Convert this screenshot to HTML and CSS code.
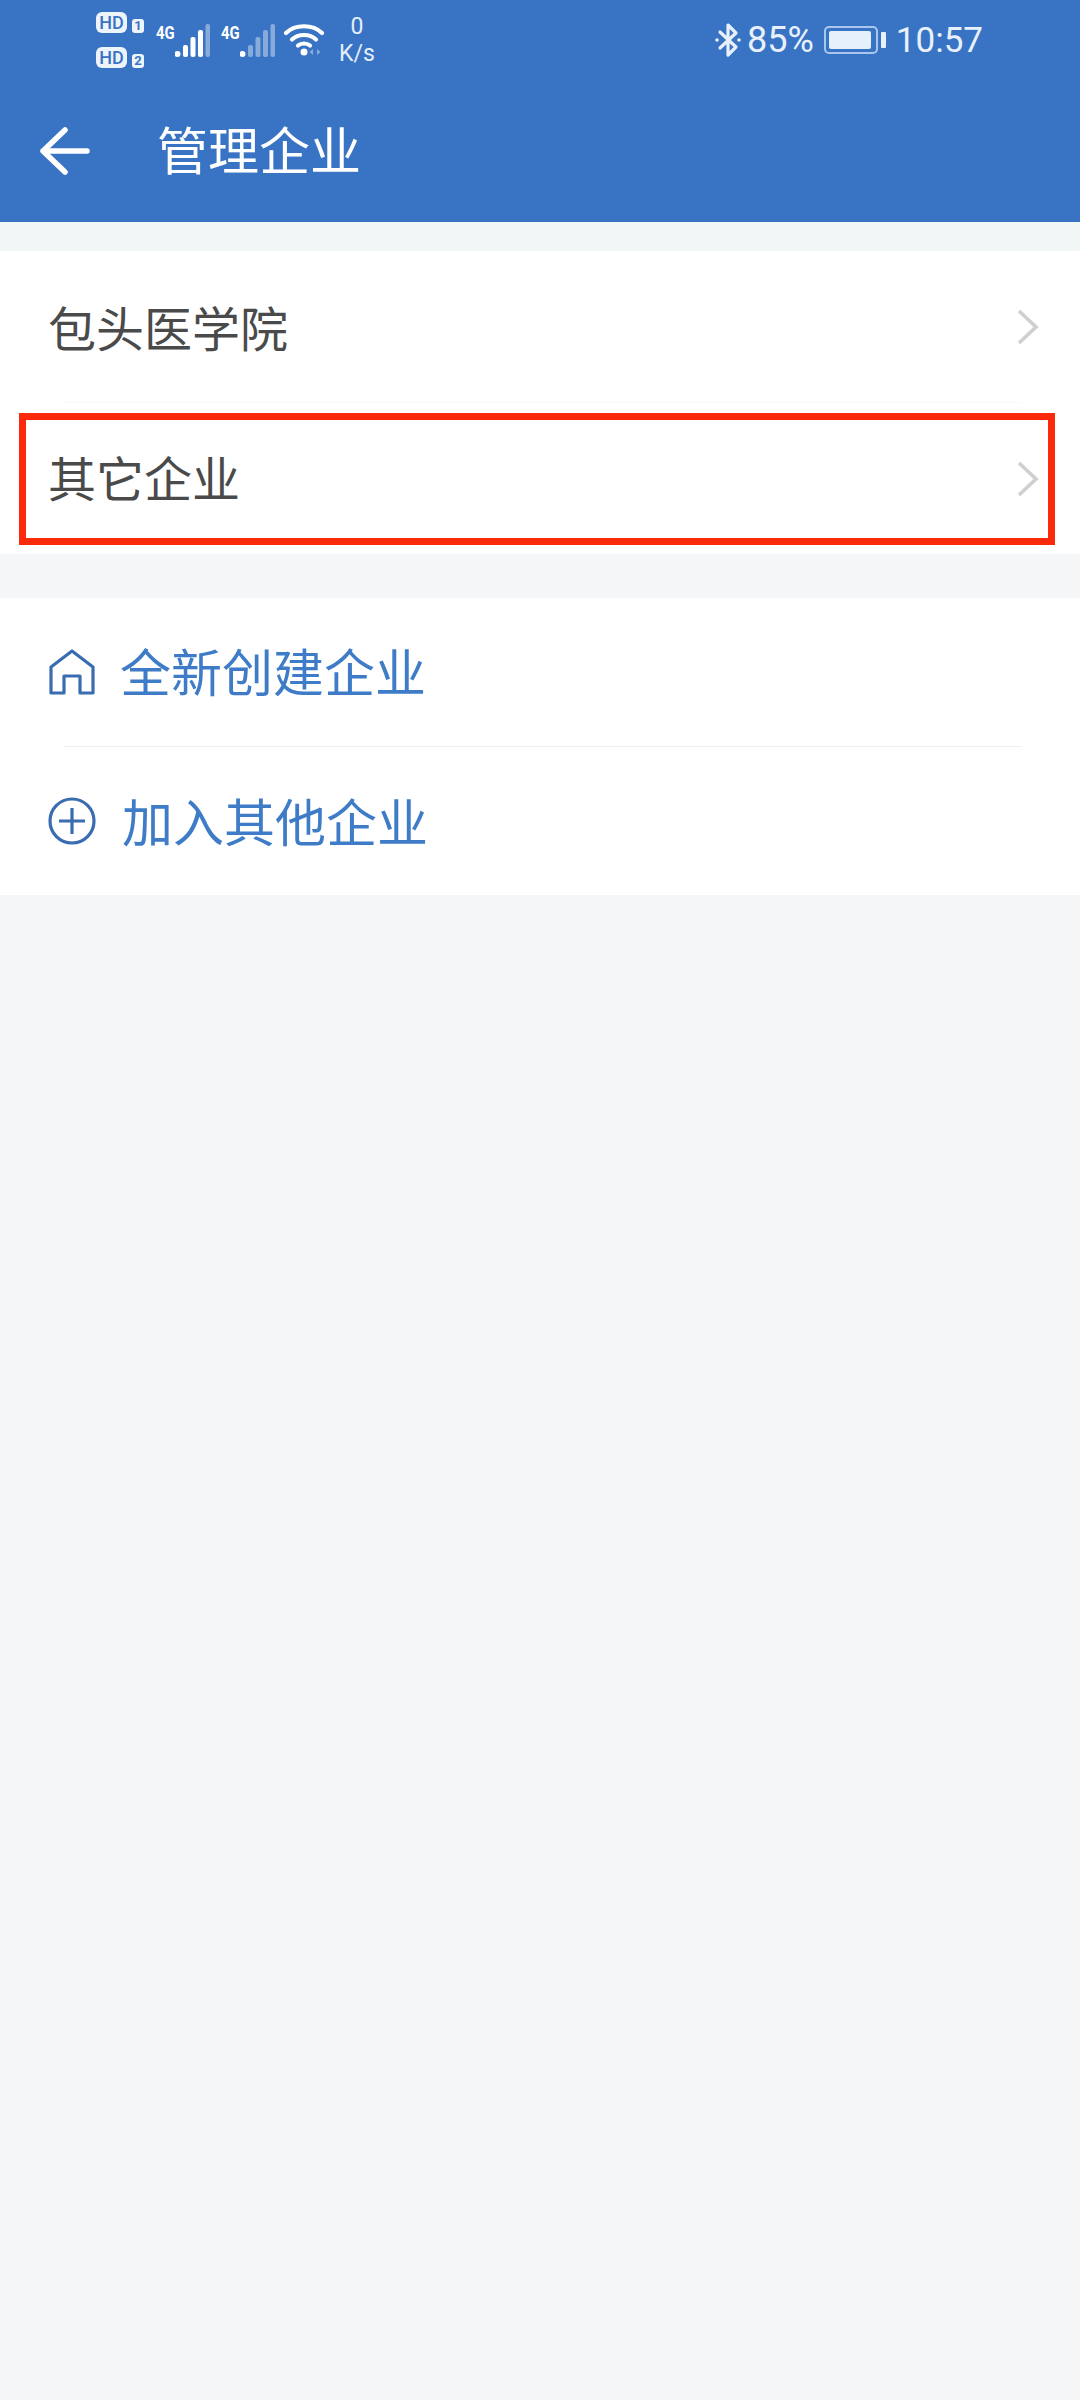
FILE: index.html
```html
<!DOCTYPE html>
<html lang="zh-CN">
<head>
    <meta charset="UTF-8">
    <meta name="viewport" content="width=device-width, initial-scale=1.0">
    <title>管理企业</title>
    <link rel="stylesheet" href="styles.css">
</head>
<body>

    <header class="app-header">
        <div class="status-bar">
            <div class="status-left">
                <div class="sim-col">
                    <div class="sim-row"><span class="hd-badge">HD</span><span class="sim-num">1</span></div>
                    <div class="sim-row"><span class="hd-badge">HD</span><span class="sim-num">2</span></div>
                </div>
                <div class="signal">
                    <span class="net-type">4G</span>
                    <svg class="signal-bars" viewBox="0 0 35 33">
                        <circle cx="2.5" cy="30" r="3" fill="#fff"/>
                        <rect x="8" y="21" width="5" height="12" rx="2" fill="#fff"/>
                        <rect x="15.5" y="13" width="5" height="20" rx="2" fill="#fff"/>
                        <rect x="23" y="6" width="5" height="27" rx="2" fill="#fff"/>
                        <rect x="30.5" y="0" width="4.5" height="33" rx="2" fill="#fff" opacity="0.4"/>
                    </svg>
                </div>
                <div class="signal">
                    <span class="net-type">4G</span>
                    <svg class="signal-bars" viewBox="0 0 35 33">
                        <circle cx="2.5" cy="30" r="3" fill="#fff"/>
                        <rect x="8" y="21" width="5" height="12" rx="2" fill="#fff" opacity="0.4"/>
                        <rect x="15.5" y="13" width="5" height="20" rx="2" fill="#fff" opacity="0.4"/>
                        <rect x="23" y="6" width="5" height="27" rx="2" fill="#fff" opacity="0.4"/>
                        <rect x="30.5" y="0" width="4.5" height="33" rx="2" fill="#fff" opacity="0.4"/>
                    </svg>
                </div>
                <svg class="wifi" viewBox="0 0 40 34" fill="none" stroke="#fff" stroke-width="4.2" stroke-linecap="round">
                    <path d="M2 10 C11 1 29 1 38 10"/>
                    <path d="M8 16.500 C14 10.500 26 10.500 32 16.500"/>
                    <path d="M14 22.500 C17 19.800 23 19.800 26 22.500"/>
                    <circle cx="20" cy="29" r="3.500" fill="#fff" stroke="none"/>
                    <path d="M29 26 L25.500 29 L29 32 Z M33 26 L36.500 29 L33 32 Z" fill="#fff" stroke="none" opacity="0.4"/>
                </svg>
                <div class="net-speed"><span>0</span><span>K/s</span></div>
            </div>
            <div class="status-right">
                <svg class="bluetooth" viewBox="0 0 26 36" fill="none" stroke="#e8f1fb" stroke-width="3.200" stroke-linejoin="round" stroke-linecap="round">
                    <path d="M5 10 L21 25 L13 33 L13 3 L21 11 L5 26"/>
                    <circle cx="2" cy="18" r="1.800" fill="#e8f1fb" stroke="none"/>
                    <circle cx="24" cy="18" r="1.800" fill="#e8f1fb" stroke="none"/>
                </svg>
                <span class="battery-pct">85%</span>
                <div class="battery">
                    <div class="battery-body"><div class="battery-fill"></div></div>
                    <div class="battery-nub"></div>
                </div>
                <span class="clock">10:57</span>
            </div>
        </div>
        <div class="title-bar">
            <svg class="back-icon" viewBox="0 0 50 48" fill="none" stroke="#fff" stroke-width="5.500" stroke-linecap="round" stroke-linejoin="round">
                <path d="M47 24 L3 24 M25 3 L3 24 L25 45"/>
            </svg>
            <h1>管理企业</h1>
        </div>
    </header>

    <section class="list-card first-card">
        <a class="list-row">
            <span class="row-name">包头医学院</span>
            <svg class="chevron" viewBox="0 0 22 36" fill="none" stroke="#cfcfcf" stroke-width="3.600">
                <path d="M2 2 L19 18 L2 34"/>
            </svg>
        </a>
        <div class="divider faint"></div>
        <a class="list-row">
            <span class="row-name">其它企业</span>
            <svg class="chevron" viewBox="0 0 22 36" fill="none" stroke="#cfcfcf" stroke-width="3.600">
                <path d="M2 2 L19 18 L2 34"/>
            </svg>
            <div class="red-mark"></div>
        </a>
    </section>

    <section class="list-card action-card">
        <a class="list-row action-row">
            <svg class="action-icon" viewBox="0 0 48 48" fill="none" stroke="#3a6cb0" stroke-width="3.200" stroke-linejoin="round">
                <path d="M3 19 L24 3 L45 19 L45 45 L32 45 L32 28 L16 28 L16 45 L3 45 Z"/>
            </svg>
            <span class="action-name">全新创建企业</span>
        </a>
        <div class="divider"></div>
        <a class="list-row action-row">
            <svg class="action-icon" viewBox="0 0 48 48" fill="none" stroke="#3a6cb0" stroke-width="3.200">
                <circle cx="24" cy="24" r="22"/>
                <path d="M11 24 L37 24 M24 11 L24 37"/>
            </svg>
            <span class="action-name">加入其他企业</span>
        </a>
    </section>

</body>
</html>
```

FILE: styles.css
```css
* {
    margin: 0;
    padding: 0;
    box-sizing: border-box;
}

body {
    width: 1080px;
    min-height: 2400px;
    background-color: #f5f6f8;
    font-family: "Liberation Sans", "Noto Sans CJK SC", sans-serif;
}

.app-header {
    height: 222px;
    background-color: #3974c4;
    color: #fff;
}

.status-bar {
    height: 80px;
    display: flex;
    justify-content: space-between;
    align-items: center;
    padding: 0 97px 0 96px;
    font-family: Roboto, sans-serif;
}

.status-left,
.status-right {
    display: flex;
    align-items: center;
}

.sim-col {
    display: flex;
    flex-direction: column;
    gap: 14px;
    margin-right: 12px;
}

.sim-row {
    display: flex;
    align-items: flex-end;
    gap: 5px;
}

.hd-badge {
    width: 31px;
    height: 21px;
    border-radius: 6px;
    background-color: #eef4fc;
    color: #3974c4;
    font-size: 18px;
    font-weight: 500;
    line-height: 21px;
    text-align: center;
}

.sim-num {
    width: 12px;
    height: 14px;
    border-radius: 3px;
    background-color: #eef4fc;
    color: #3974c4;
    font-size: 13px;
    font-weight: 700;
    line-height: 14px;
    text-align: center;
}

.signal {
    display: flex;
    align-items: flex-start;
    width: 65px;
}

.net-type {
    width: 19px;
    margin-top: -1px;
    font-size: 19px;
    font-weight: 700;
    line-height: 19px;
    transform: scaleX(0.78);
    transform-origin: left center;
    white-space: nowrap;
}

.signal-bars {
    width: 35px;
    height: 33px;
}

.wifi {
    width: 40px;
    height: 34px;
    margin-left: -2px;
}

.net-speed {
    display: flex;
    flex-direction: column;
    align-items: center;
    margin-left: 15px;
    font-size: 23px;
    line-height: 27px;
    color: #e4eefa;
}

.bluetooth {
    width: 26px;
    height: 36px;
}

.battery-pct {
    margin-left: 6px;
    font-size: 36px;
    color: #e8f1fb;
}

.battery {
    display: flex;
    align-items: center;
    margin-left: 10px;
}

.battery-body {
    width: 54px;
    height: 28px;
    padding: 3px;
    border: 2px solid #a9c7ec;
    border-radius: 5px;
}

.battery-fill {
    width: 42px;
    height: 100%;
    border-radius: 2px;
    background-color: #e6f0fb;
}

.battery-nub {
    width: 5px;
    height: 16px;
    margin-left: 3px;
    border-radius: 1px;
    background-color: #e6f0fb;
}

.clock {
    margin-left: 10px;
    font-size: 35px;
    color: #e8f1fb;
}

.title-bar {
    display: flex;
    align-items: center;
    height: 142px;
    padding-left: 40px;
}

.back-icon {
    width: 50px;
    height: 48px;
}

.title-bar h1 {
    margin-left: 67px;
    padding-top: 3px;
    font-size: 51px;
    font-weight: 400;
    line-height: 70px;
    color: #fff;
}

.list-card {
    background-color: #fff;
}

.first-card {
    margin-top: 29px;
    box-shadow: 0 -29px 0 #f1f6f7;
}

.action-card {
    margin-top: 44px;
}

.list-row {
    position: relative;
    display: flex;
    align-items: center;
    height: 151px;
    padding: 0 41px 0 48px;
}

.row-name {
    flex: 1;
    padding-bottom: 5px;
    font-size: 48px;
    color: #4a4a4a;
}

.list-row:first-child .row-name {
    padding-bottom: 1px;
}

.chevron {
    width: 22px;
    height: 36px;
}

/* annotation drawn over the row */
.red-mark {
    position: absolute;
    left: 19px;
    right: 25px;
    top: 10px;
    bottom: 9px;
    border: 7px solid #fb2a0a;
}

.divider {
    height: 1px;
    margin: 0 58px 0 64px;
    background-color: #f0f0f0;
}

.divider.faint {
    background-color: #fdf9fb;
}

.action-row {
    height: 148px;
    padding-left: 48px;
}

.action-icon {
    width: 48px;
    height: 48px;
    flex-shrink: 0;
}

.action-name {
    margin-left: 24px;
    padding-bottom: 5px;
    font-size: 51px;
    color: #3f7cc8;
}

.action-row:last-child .action-name {
    margin-left: 26px;
    padding-bottom: 3px;
}
```
